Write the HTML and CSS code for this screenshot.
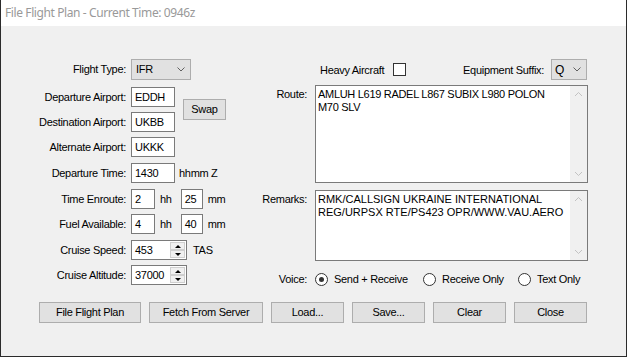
FILE: index.html
```html
<!DOCTYPE html>
<html>
<head>
<meta charset="utf-8">
<link rel="stylesheet" href="styles.css">
</head>
<body>
<div class="window">
  <div class="titlebar">File Flight Plan - Current Time: 0946z</div>
  <div class="content">
    <div class="form">
      <div class="left">
        <div class="lbl">Flight Type:</div>
        <div class="field span"><div class="combo combo-type"><span>IFR</span><svg class="chev" width="8" height="5" viewBox="0 0 8 5"><polyline points="0.5,0.5 4,4 7.5,0.5" fill="none" stroke="#606060" stroke-width="1"/></svg></div></div>

        <div class="lbl">Departure Airport:</div>
        <div class="field"><div class="tb w44">EDDH</div></div>
        <div class="swap-cell"><div class="btn swap">Swap</div></div>

        <div class="lbl">Destination Airport:</div>
        <div class="field"><div class="tb w44">UKBB</div></div>

        <div class="lbl">Alternate Airport:</div>
        <div class="field span"><div class="tb w44">UKKK</div></div>

        <div class="lbl">Departure Time:</div>
        <div class="field span"><div class="tb w44">1430</div><span class="unit u-z">hhmm Z</span></div>

        <div class="lbl">Time Enroute:</div>
        <div class="field span"><div class="tb w24">2</div><span class="unit u-hh">hh</span><div class="tb w22">25</div><span class="unit u-mm">mm</span></div>

        <div class="lbl">Fuel Available:</div>
        <div class="field span"><div class="tb w24">4</div><span class="unit u-hh">hh</span><div class="tb w22">40</div><span class="unit u-mm">mm</span></div>

        <div class="lbl">Cruise Speed:</div>
        <div class="field span"><div class="spin"><span class="spin-val">453</span><div class="spin-btns"><div class="sb"><span class="tri-up"></span></div><div class="sb"><span class="tri-down"></span></div></div></div><span class="unit u-tas">TAS</span></div>

        <div class="lbl">Cruise Altitude:</div>
        <div class="field span"><div class="spin"><span class="spin-val">37000</span><div class="spin-btns"><div class="sb"><span class="tri-up"></span></div><div class="sb"><span class="tri-down"></span></div></div></div></div>
      </div>

      <div class="right">
        <div class="rlbl"></div>
        <div class="heavy-row">
          <span>Heavy Aircraft</span>
          <span class="check"></span>
          <span class="eq-lbl">Equipment Suffix:</span>
          <div class="combo combo-eq"><span>Q</span><svg class="chev" width="8" height="5" viewBox="0 0 8 5"><polyline points="0.5,0.5 4,4 7.5,0.5" fill="none" stroke="#606060" stroke-width="1"/></svg></div>
        </div>

        <div class="rlbl top">Route:</div>
        <div class="area area-route">
          <div class="area-text">AMLUH L619 RADEL L867 SUBIX L980 POLON<br>M70 SLV</div>
          <div class="vscroll"><svg width="17" height="17" viewBox="0 0 17 17"><polyline points="5,10 8.5,6.5 12,10" fill="none" stroke="#c2c2c2" stroke-width="1"/></svg><svg width="17" height="17" viewBox="0 0 17 17"><polyline points="5,7 8.5,10.5 12,7" fill="none" stroke="#c2c2c2" stroke-width="1"/></svg></div>
        </div>

        <div class="rlbl top">Remarks:</div>
        <div class="area area-remarks">
          <div class="area-text wide">RMK/CALLSIGN UKRAINE INTERNATIONAL<br>REG/URPSX RTE/PS423 OPR/WWW.VAU.AERO</div>
          <div class="vscroll"><svg width="17" height="17" viewBox="0 0 17 17"><polyline points="5,10 8.5,6.5 12,10" fill="none" stroke="#c2c2c2" stroke-width="1"/></svg><svg width="17" height="17" viewBox="0 0 17 17"><polyline points="5,7 8.5,10.5 12,7" fill="none" stroke="#c2c2c2" stroke-width="1"/></svg></div>
        </div>

        <div class="rlbl">Voice:</div>
        <div class="voice-row">
          <span class="opt o1"><span class="radio on"></span>Send + Receive</span>
          <span class="opt o2"><span class="radio"></span>Receive Only</span>
          <span class="opt"><span class="radio"></span>Text Only</span>
        </div>
      </div>
    </div>

    <div class="buttons">
      <div class="btn b-file">File Flight Plan</div>
      <div class="btn b-fetch">Fetch From Server</div>
      <div class="btn b-std">Load...</div>
      <div class="btn b-std">Save...</div>
      <div class="btn b-std">Clear</div>
      <div class="btn b-std">Close</div>
    </div>
  </div>
</div>
</body>
</html>
```

FILE: styles.css
```css
html, body {
  margin: 0;
  padding: 0;
}
body {
  background: #2b2b2b;
  width: 627px;
  height: 357px;
  overflow: hidden;
  font-family: "Liberation Sans", Arial, sans-serif;
  font-size: 11px;
  letter-spacing: -0.3px;
  color: #000;
}
.window {
  margin-left: 1px;
  width: 625px;
  height: 356px;
  background: #f0f0f0;
}
.titlebar {
  height: 26px;
  background: #fff;
  box-sizing: border-box;
  padding-left: 4px;
  font-family: "Noto Sans", "Open Sans", sans-serif;
  font-size: 12px;
  letter-spacing: -0.4px;
  line-height: 25px;
  color: #999;
}
.content {
  padding-top: 33px;
}
.form {
  display: flex;
  align-items: flex-start;
}
.left {
  width: 259px;
  display: grid;
  grid-template-columns: 130px 52px auto;
  grid-template-rows: 23px 20px 20px 21px 21px 20px 21px 20px 20px;
  row-gap: 5px;
  align-items: start;
}
.lbl {
  grid-column: 1;
  text-align: right;
  padding-right: 5px;
  line-height: 20px;
  white-space: nowrap;
}
.field {
  grid-column: 2;
  display: flex;
  align-items: center;
  height: 20px;
}
.field.span {
  grid-column: 2 / 4;
}
.swap-cell {
  grid-column: 3;
  grid-row: 2 / 4;
  align-self: center;
}
.tb {
  box-sizing: border-box;
  height: 20px;
  border: 1px solid #7a7a7a;
  background: #fff;
  padding: 0 3px;
  line-height: 18px;
}
.w44 { width: 44px; }
.w24 { width: 24px; }
.w22 { width: 22px; }
.unit { white-space: nowrap; }
.u-z { margin-left: 4px; }
.u-hh { margin-left: 5px; margin-right: 9px; }
.u-mm { margin-left: 5px; }
.u-tas { margin-left: 6px; }

.combo {
  box-sizing: border-box;
  height: 21px;
  border: 1px solid #adadad;
  background: #e1e1e1;
  display: flex;
  align-items: center;
  justify-content: space-between;
  padding: 0 5px 0 4px;
}
.combo-type { width: 60px; }
.combo-eq { width: 36px; padding-left: 3px; font-size: 12px; }
.chev { display: block; }

.spin {
  box-sizing: border-box;
  width: 56px;
  height: 20px;
  border: 1px solid #7a7a7a;
  background: #fff;
  display: flex;
  justify-content: space-between;
  padding: 1px 1px 1px 3px;
}
.spin-val { line-height: 16px; }
.spin-btns {
  width: 15px;
  display: flex;
  flex-direction: column;
}
.sb {
  flex: 1;
  box-sizing: border-box;
  border: 1px solid #cfcfcf;
  background: #f0f0f0;
  display: flex;
  align-items: center;
  justify-content: center;
}
.tri-up, .tri-down {
  width: 0;
  height: 0;
  border-left: 3px solid transparent;
  border-right: 3px solid transparent;
}
.tri-up { border-bottom: 3px solid #000; }
.tri-down { border-top: 3px solid #000; }

.btn {
  box-sizing: border-box;
  height: 21px;
  border: 1px solid #adadad;
  background: #e1e1e1;
  text-align: center;
  line-height: 19px;
  white-space: nowrap;
}
.swap { width: 43px; }

.right {
  display: grid;
  grid-template-columns: 47px 273px;
  column-gap: 8px;
  grid-template-rows: 26px 105px 79px 20px;
}
.rlbl {
  text-align: right;
  line-height: 20px;
  white-space: nowrap;
}
.rlbl.top {
  line-height: 13px;
  padding-top: 3px;
}
.heavy-row {
  display: flex;
  align-items: center;
  height: 21px;
  padding-left: 5px;
}
.check {
  box-sizing: border-box;
  width: 13px;
  height: 13px;
  border: 1px solid #333;
  background: #fff;
  margin-left: 9px;
}
.eq-lbl { margin-left: auto; margin-right: 7px; }
.combo-eq { margin-right: 1px; }

.area {
  box-sizing: border-box;
  border: 1px solid #7a7a7a;
  background: #fff;
  display: flex;
  justify-content: space-between;
}
.area-route { height: 98px; }
.area-remarks { height: 71px; }
.area-text {
  padding: 2px 0 0 2px;
  line-height: 13px;
  white-space: nowrap;
}
.area-text.wide { letter-spacing: 0; }
.vscroll {
  width: 17px;
  background: #f0f0f0;
  display: flex;
  flex-direction: column;
  justify-content: space-between;
}
.vscroll svg { display: block; }

.voice-row {
  display: flex;
  align-items: center;
  height: 20px;
}
.opt {
  display: flex;
  align-items: center;
  white-space: nowrap;
}
.o1 { width: 108px; }
.o2 { width: 95px; }
.radio {
  box-sizing: border-box;
  width: 13px;
  height: 13px;
  border: 1px solid #333;
  border-radius: 50%;
  background: #fff;
  margin-right: 6px;
  display: flex;
  align-items: center;
  justify-content: center;
}
.radio.on::after {
  content: "";
  width: 5px;
  height: 5px;
  border-radius: 50%;
  background: #333;
}

.buttons {
  display: flex;
  gap: 8px;
  margin-top: 13px;
  padding-left: 38px;
}
.b-file { width: 102px; }
.b-fetch { width: 114px; }
.b-std { width: 73px; }
```
